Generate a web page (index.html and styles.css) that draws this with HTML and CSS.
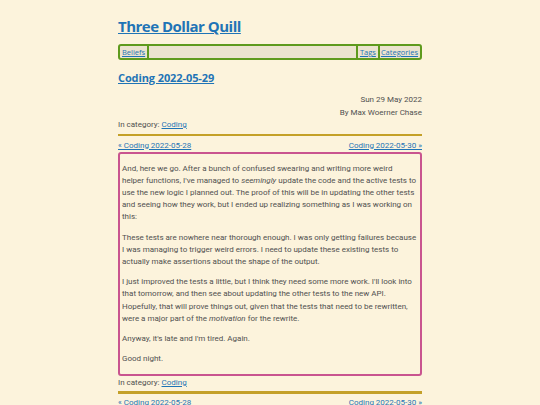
FILE: index.html
```html
<!DOCTYPE html>
<html>
<head>
<meta charset="utf-8">
<link rel="stylesheet" href="styles.css">
</head>
<body>
<div class="page">
  <header class="site-head">
    <h1 class="site-title"><a href="#">Three Dollar Quill</a></h1>
    <nav class="menu">
      <a href="#" class="menu-item">Beliefs</a>
      <span class="menu-fill"></span>
      <a href="#" class="menu-item">Tags</a>
      <a href="#" class="menu-item">Categories</a>
    </nav>
  </header>
  <h2 class="post-title"><a href="#">Coding 2022-05-29</a></h2>
  <div class="meta">
    <div>Sun 29 May 2022</div>
    <div>By Max Woerner Chase</div>
  </div>
  <div class="category">In category: <a href="#">Coding</a></div>
  <hr class="rule">
  <div class="pager"><a href="#">« Coding 2022-05-28</a><a href="#">Coding 2022-05-30 »</a></div>
  <article class="post">
    <p>And, here we go. After a bunch of confused swearing and writing more weird<br>helper functions, I've managed to <em>seemingly</em> update the code and the active tests to<br>use the new logic I planned out. The proof of this will be in updating the other tests<br>and seeing how they work, but I ended up realizing something as I was working on<br>this:</p>
    <p>These tests are nowhere near thorough enough. I was only getting failures because<br>I was managing to trigger weird errors. I need to update these existing tests to<br>actually make assertions about the shape of the output.</p>
    <p>I just improved the tests a little, but I think they need some more work. I'll look into<br>that tomorrow, and then see about updating the other tests to the new API.<br>Hopefully, that will prove things out, given that the tests that need to be rewritten,<br>were a major part of the <em>motivation</em> for the rewrite.</p>
    <p>Anyway, it's late and I'm tired. Again.</p>
    <p>Good night.</p>
  </article>
  <div class="category">In category: <a href="#">Coding</a></div>
  <hr class="rule">
  <div class="pager"><a href="#">« Coding 2022-05-28</a><a href="#">Coding 2022-05-30 »</a></div>
</div>
</body>
</html>
```
FILE: styles.css
```css
html, body { margin: 0; padding: 0; }
body {
  background: #fcf3dc;
  color: #505050;
  font-family: Roboto, "Liberation Sans", sans-serif;
  font-size: 8px;
  line-height: 12.5px;
}
a { color: #1f74b6; }
.page {
  width: 304px;
  margin: 0 auto;
  padding-top: 14px;
}
.site-title {
  margin: 0;
  font-family: "Open Sans", sans-serif;
  font-weight: 700;
  font-size: 15px;
  line-height: 24px;
  letter-spacing: -0.5px;
}
.menu {
  margin-top: 6px;
  display: flex;
  align-items: center;
  border: 2px solid #5e9a1e;
  border-radius: 3px;
  background: #ebe3cf;
  height: 12px;
  padding: 0 1px;
  font-family: "Open Sans", sans-serif;
  font-size: 7.5px;
  line-height: 12px;
}
.menu-item { padding: 0 1px; }
.menu-fill {
  flex: 1;
  align-self: stretch;
  border-left: 2px solid #5e9a1e;
  border-right: 2px solid #5e9a1e;
  margin: 0 1px;
}
.menu-item + .menu-item { border-left: 2px solid #5e9a1e; margin-left: 1px; }
.post-title {
  margin: 9px 0 0;
  font-family: "Open Sans", sans-serif;
  font-weight: 700;
  font-size: 11px;
  line-height: 18px;
  letter-spacing: -0.1px;
}
.meta {
  text-align: right;
  margin-top: 7px;
}
.rule {
  border: 0;
  height: 2.5px;
  background: #c4a028;
  margin: 2px 0 3.5px;
}
.post + .category { margin-top: 0.5px; }
.post + .category + .rule { margin-top: 2px; }
.pager {
  display: flex;
  justify-content: space-between;
  line-height: 12px;
}
.post {
  border: 2px solid #c9548f;
  border-radius: 3px;
  padding: 1px 2px;
  line-height: 12.2px;
}
.post p { margin: 8px 0; white-space: nowrap; }
```
